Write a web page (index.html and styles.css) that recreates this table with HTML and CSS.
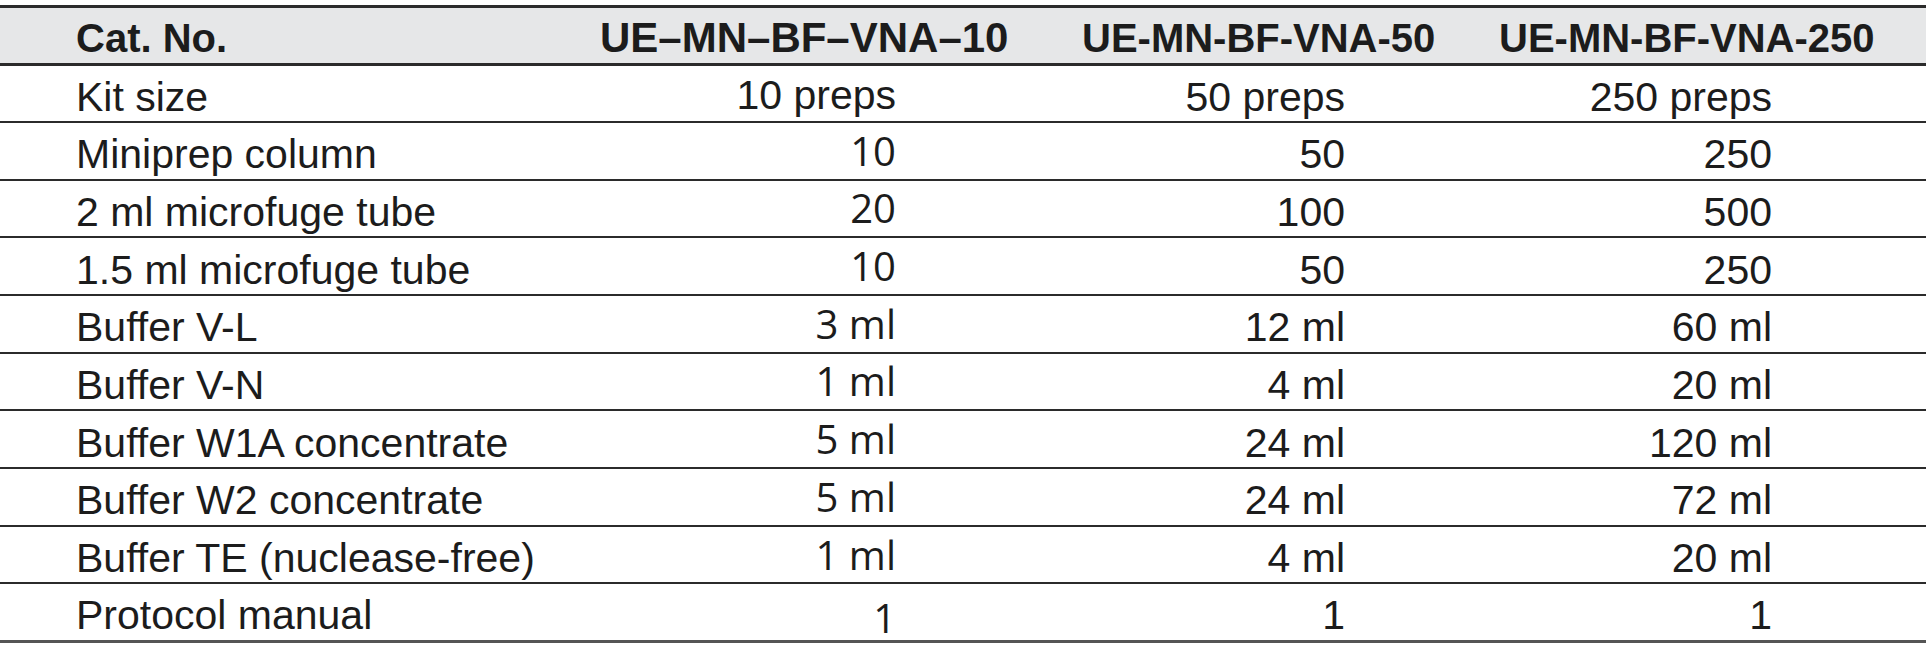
FILE: index.html
```html
<html>
<head>
    <meta charset='UTF-8'>
    <meta name='viewport' content='width=device-width, initial-scale=1.0'>
    <title>Kit contents</title>
    <link rel="stylesheet" href="styles.css">
</head>
<body>
    <table class='spec'>
        <colgroup>
            <col class='w-name'>
            <col class='w-c1'>
            <col class='w-c2'>
            <col class='w-c3'>
        </colgroup>
        <thead>
            <tr>
                <th class='name'>Cat. No.</th>
                <th class='c1'>UE–MN–BF–VNA–10</th>
                <th class='c2'>UE-MN-BF-VNA-50</th>
                <th class='c3'>UE-MN-BF-VNA-250</th>
            </tr>
        </thead>
        <tbody>
            <tr><td class='name'>Kit size</td><td class='c1 arial'>10 preps</td><td class='c2'>50 preps</td><td class='c3'>250 preps</td></tr>
            <tr><td class='name'>Miniprep column</td><td class='c1'>10</td><td class='c2'>50</td><td class='c3'>250</td></tr>
            <tr><td class='name'>2 ml microfuge tube</td><td class='c1'>20</td><td class='c2'>100</td><td class='c3'>500</td></tr>
            <tr><td class='name'>1.5 ml microfuge tube</td><td class='c1'>10</td><td class='c2'>50</td><td class='c3'>250</td></tr>
            <tr><td class='name'>Buffer V-L</td><td class='c1'>3 ml</td><td class='c2'>12 ml</td><td class='c3'>60 ml</td></tr>
            <tr><td class='name'>Buffer V-N</td><td class='c1'>1 ml</td><td class='c2'>4 ml</td><td class='c3'>20 ml</td></tr>
            <tr><td class='name'>Buffer W1A concentrate</td><td class='c1'>5 ml</td><td class='c2'>24 ml</td><td class='c3'>120 ml</td></tr>
            <tr><td class='name'>Buffer W2 concentrate</td><td class='c1'>5 ml</td><td class='c2'>24 ml</td><td class='c3'>72 ml</td></tr>
            <tr><td class='name'>Buffer TE (nuclease-free)</td><td class='c1'>1 ml</td><td class='c2'>4 ml</td><td class='c3'>20 ml</td></tr>
            <tr class='last'><td class='name'>Protocol manual</td><td class='c1 low'>1</td><td class='c2'>1</td><td class='c3'>1</td></tr>
        </tbody>
    </table>
</body>
</html>
```

FILE: styles.css
```css
html, body {
    margin: 0;
    padding: 0;
    background: #ffffff;
    color: #1c1c1c;
    font-family: 'Liberation Sans', Arial, sans-serif;
}

.spec {
    width: 1926px;
    margin-top: 5px;
    border-collapse: collapse;
    table-layout: fixed;
    border-top: 3px solid #2b2b2b;
}

.w-name { width: 560px; }
.w-c1 { width: 480px; }
.w-c2 { width: 420px; }
.w-c3 { width: 466px; }

th, td {
    height: 57.7px;
    box-sizing: border-box;
    padding: 8px 0 0 0;
    font-size: 41px;
    line-height: 1;
    white-space: nowrap;
    vertical-align: middle;
}

thead tr {
    background: #e6e7e8;
    border-bottom: 3px solid #2b2b2b;
}

th {
    font-weight: bold;
    text-align: left;
    font-size: 40px;
    padding-top: 6px;
}

th.name { padding-left: 76px; }
th.c1 { padding-left: 40px; font-size: 42px; }
th.c2 { padding-left: 42px; }
th.c3 { padding-left: 39px; }

tbody tr {
    border-bottom: 2px solid #2b2b2b;
}

tbody tr.last {
    border-bottom: 3px solid #555555;
}

td.name {
    padding-left: 76px;
    text-align: left;
}

td.c1, td.c2, td.c3 {
    text-align: right;
}

/* the first kit column was set in another face */
td.c1 {
    padding-right: 144px;
    padding-top: 2px;
    padding-bottom: 2px;
    font-family: 'Open Sans', 'Noto Sans', sans-serif;
    font-size: 40px;
}

td.c1.low {
    padding-top: 12px;
    padding-bottom: 0;
}

td.c1.arial {
    font-family: 'Liberation Sans', Arial, sans-serif;
    font-size: 41px;
    padding-top: 4px;
    padding-bottom: 0;
}

td.c2 { padding-right: 115px; }
td.c3 { padding-right: 154px; }
```
